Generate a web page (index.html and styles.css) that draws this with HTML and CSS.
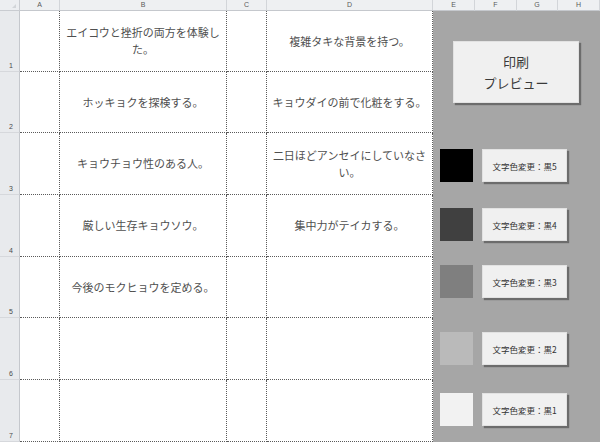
FILE: index.html
```html
<!DOCTYPE html>
<html lang="ja">
<head>
<meta charset="utf-8">
<title>Sheet</title>
<link rel="stylesheet" href="styles.css">
</head>
<body>
<div class="sheet">
  <div class="corner"><span class="tri"></span></div>
  <div class="ch">A</div><div class="ch">B</div><div class="ch">C</div><div class="ch">D</div>
  <div class="ch">E</div><div class="ch">F</div><div class="ch">G</div><div class="ch">H</div>

  <div class="rh">1</div><div class="c"></div><div class="c">エイコウと挫折の両方を体験した。</div><div class="c"></div><div class="c">複雑タキな背景を持つ。</div><div class="g"></div><div class="g"></div><div class="g"></div><div class="g"></div>
  <div class="rh">2</div><div class="c"></div><div class="c">ホッキョクを探検する。</div><div class="c"></div><div class="c">キョウダイの前で化粧をする。</div><div class="g"></div><div class="g"></div><div class="g"></div><div class="g"></div>
  <div class="rh">3</div><div class="c"></div><div class="c">キョウチョウ性のある人。</div><div class="c"></div><div class="c">二日ほどアンセイにしていなさい。</div><div class="g"></div><div class="g"></div><div class="g"></div><div class="g"></div>
  <div class="rh">4</div><div class="c"></div><div class="c">厳しい生存キョウソウ。</div><div class="c"></div><div class="c">集中力がテイカする。</div><div class="g"></div><div class="g"></div><div class="g"></div><div class="g"></div>
  <div class="rh">5</div><div class="c"></div><div class="c">今後のモクヒョウを定める。</div><div class="c"></div><div class="c"></div><div class="g"></div><div class="g"></div><div class="g"></div><div class="g"></div>
  <div class="rh">6</div><div class="c"></div><div class="c"></div><div class="c"></div><div class="c"></div><div class="g"></div><div class="g"></div><div class="g"></div><div class="g"></div>
  <div class="rh">7</div><div class="c"></div><div class="c"></div><div class="c"></div><div class="c"></div><div class="g"></div><div class="g"></div><div class="g"></div><div class="g"></div>

  <div class="shape btn-print"><span>印刷</span><span>プレビュー</span></div>

  <div class="shape swatch sw5 r1"></div><div class="shape btn-color r1">文字色変更：黒5</div>
  <div class="shape swatch sw4 r2"></div><div class="shape btn-color r2">文字色変更：黒4</div>
  <div class="shape swatch sw3 r3"></div><div class="shape btn-color r3">文字色変更：黒3</div>
  <div class="shape swatch sw2 r4"></div><div class="shape btn-color r4">文字色変更：黒2</div>
  <div class="shape swatch sw1 r5"></div><div class="shape btn-color r5">文字色変更：黒1</div>
</div>
</body>
</html>
```

FILE: styles.css
```css
html, body {
  margin: 0;
  padding: 0;
  background: #ffffff;
}

body {
  width: 600px;
  height: 443px;
  overflow: hidden;
  font-family: "Noto Sans CJK JP", "Liberation Sans", sans-serif;
}

.sheet {
  position: relative;
  display: grid;
  grid-template-columns: 20px 40px 167px 40px 166px 42px 42px 41px 42px;
  grid-template-rows: 11px 61px 61px 62px 62px 61px 62px 62px;
  width: 600px;
  height: 443px;
  background: #ffffff;
}

.corner {
  position: relative;
  box-sizing: border-box;
  background: #eceef1;
  border-right: 1px solid #c9ccd1;
  border-bottom: 1px solid #c9ccd1;
}

.tri {
  position: absolute;
  right: 3px;
  bottom: 2px;
  width: 0;
  height: 0;
  border-left: 4px solid transparent;
  border-bottom: 4px solid #d2d5d9;
}

.ch {
  box-sizing: border-box;
  background: #eef0f2;
  border-right: 1px solid #d2d5d9;
  border-bottom: 1px solid #c5c8cd;
  font-family: "Liberation Sans", sans-serif;
  font-size: 7px;
  line-height: 10px;
  color: #5a5a5a;
  text-align: center;
}

.rh {
  box-sizing: border-box;
  background: #e8eaed;
  border-right: 1px solid #c5c8cd;
  border-bottom: 1px solid #d6d8dc;
  font-family: "Liberation Sans", sans-serif;
  font-size: 7px;
  line-height: 8px;
  color: #4a4a4a;
  display: flex;
  align-items: flex-end;
  padding: 0 0 1px 9px;
}

.c {
  box-sizing: border-box;
  border-right: 1px dotted #5a5a5a;
  border-bottom: 1px dotted #5a5a5a;
  display: flex;
  align-items: center;
  justify-content: center;
  text-align: center;
  padding: 0 4px;
  font-size: 11px;
  line-height: 17px;
  color: #4f4f4f;
}

.g {
  background: #a6a6a6;
}

.shape {
  position: absolute;
  box-sizing: border-box;
}

.btn-print {
  left: 453px;
  top: 41px;
  width: 126px;
  height: 62px;
  background: #f0f0f0;
  border: 1px solid #e2e2e2;
  box-shadow: 2px 2px 1px rgba(60, 60, 60, 0.55);
  display: flex;
  flex-direction: column;
  align-items: center;
  justify-content: center;
  font-size: 13px;
  line-height: 21px;
  color: #3a3a3a;
}

.swatch {
  left: 440px;
  width: 33px;
  height: 33px;
}

.btn-color {
  left: 482px;
  width: 85px;
  height: 33px;
  background: #f0f0f0;
  border: 1px solid #e2e2e2;
  box-shadow: 2px 2px 1px rgba(60, 60, 60, 0.55);
  display: flex;
  align-items: center;
  justify-content: center;
  font-size: 8.5px;
  color: #333333;
  white-space: nowrap;
}

.sw5 { background: #000000; }
.sw4 { background: #404040; }
.sw3 { background: #7f7f7f; }
.sw2 { background: #bababa; }
.sw1 { background: #f2f2f2; }

.r1 { top: 149px; }
.r2 { top: 208px; }
.r3 { top: 265px; }
.r4 { top: 332px; }
.r5 { top: 393px; }
```
